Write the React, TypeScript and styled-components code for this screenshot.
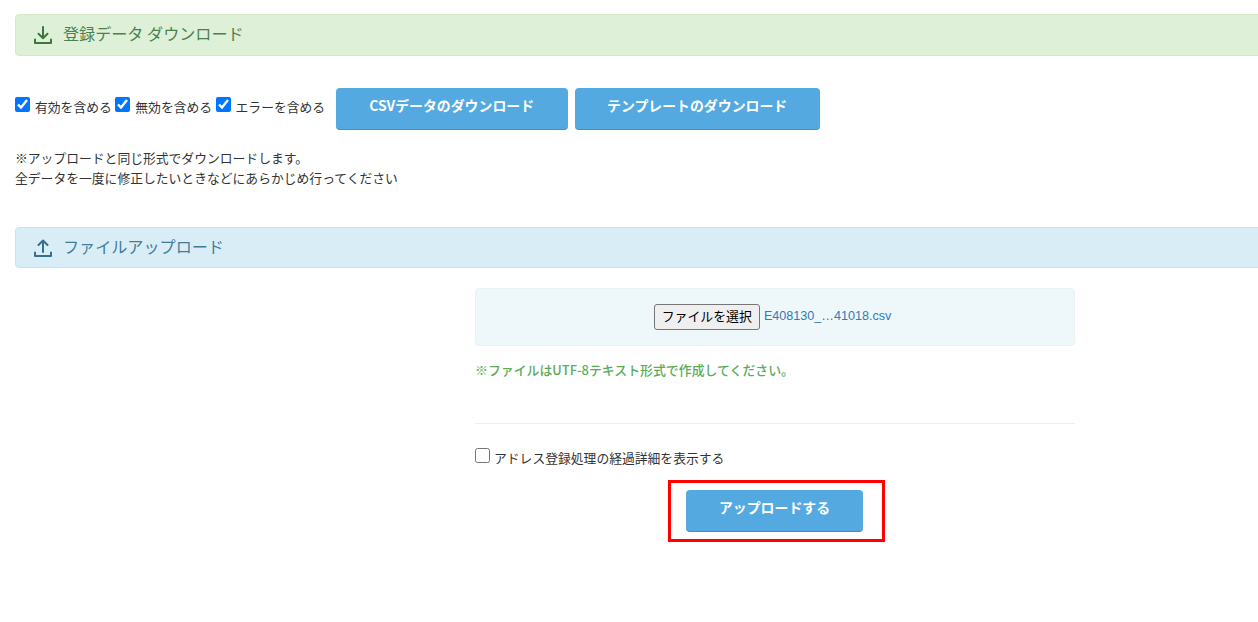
import React from 'react';
import styled, { createGlobalStyle } from 'styled-components';

const GlobalStyle = createGlobalStyle`
  html, body {
    margin: 0;
    padding: 0;
    background: #fff;
    overflow: hidden;
  }
  body {
    font-family: "Noto Sans CJK JP", "Liberation Sans", sans-serif;
    font-size: 12.8px;
    color: #333;
  }
`;

const Page = styled.div`
  width: 1258px;
  height: 622px;
  padding: 14px 0 0 15px;
  box-sizing: border-box;
  overflow: hidden;
`;

const Heading = styled.div<{ $tone: 'green' | 'blue' }>`
  display: flex;
  align-items: center;
  gap: 10px;
  width: 1300px;
  height: ${(p) => (p.$tone === 'green' ? '42px' : '41px')};
  box-sizing: border-box;
  padding-left: 17px;
  border: 1px solid ${(p) => (p.$tone === 'green' ? '#d6e9c6' : '#bce8f1')};
  border-radius: 4px;
  background: ${(p) => (p.$tone === 'green' ? '#dff0d8' : '#d9edf7')};
  color: ${(p) => (p.$tone === 'green' ? '#3c763d' : '#31708f')};
  font-size: 16.1px;
  svg {
    width: 20px;
    height: 20px;
    flex: none;
  }
`;

const HeadingTitle = styled.span`
  margin-bottom: 4px;
  opacity: 0.9;
`;

const OptionRow = styled.div`
  display: flex;
  align-items: center;
  height: 42px;
  margin-top: 32px;
`;

const CheckLabel = styled.label`
  display: flex;
  align-items: center;
  margin-right: 3.5px;
  margin-bottom: 6px;
  line-height: 20px;
  span {
    margin-left: 5px;
    position: relative;
    top: 1px;
  }
`;

const Check = styled.input`
  width: 15px;
  height: 15px;
  margin: 0;
  position: relative;
  top: -2px;
`;

const BlueButton = styled.button<{ $width: number }>`
  width: ${(p) => p.$width}px;
  height: 42px;
  padding: 0 0 7px;
  border: none;
  border-bottom: 1px solid #4a8fbd;
  border-radius: 4px;
  background: #53a9e0;
  color: #fff;
  font-family: inherit;
  font-size: 13.9px;
  font-weight: 700;
`;

const Buttons = styled.div`
  display: flex;
  gap: 7px;
  margin-left: 7px;
`;

const Note = styled.p`
  margin: 18px 0 0;
  font-size: 12.8px;
  line-height: 20px;
`;

const UploadHeading = styled.div`
  margin-top: 39px;
`;

const Form = styled.div`
  width: 600px;
  margin: 20px 0 0 460px;
`;

const FileBox = styled.div`
  display: flex;
  align-items: center;
  justify-content: center;
  height: 58px;
  box-sizing: border-box;
  padding-right: 5px;
  border: 1px solid #e8f1f4;
  border-radius: 4px;
  background: #eef7fa;
`;

const FileButton = styled.button`
  height: 26px;
  padding: 0 7px 3px;
  border: 1px solid #767676;
  border-radius: 3px;
  background: #efefef;
  color: #000;
  font-family: inherit;
  font-size: 12.9px;
`;

const FileName = styled.span`
  margin-left: 4px;
  margin-bottom: 2px;
  color: #337ab7;
  font-family: "Liberation Sans", sans-serif;
  font-size: 12.6px;
`;

const HelpText = styled.p`
  margin: 14px 0 0;
  color: #5bab5b;
  font-size: 12.9px;
  font-weight: 500;
  line-height: 20px;
`;

const Rule = styled.hr`
  margin: 43px 0 0;
  border: none;
  border-top: 1px solid #eee;
`;

const DetailLabel = styled.label`
  display: flex;
  align-items: center;
  margin-top: 23px;
  line-height: 20px;
  span {
    margin-left: 4px;
    position: relative;
    top: 1px;
  }
`;

const Highlight = styled.div`
  width: 217px;
  height: 62px;
  box-sizing: border-box;
  margin: 13px 0 0 193px;
  padding: 7px 0 0 15px;
  border: 3px solid #f00;
`;

const DownloadIcon = () => (
  <svg viewBox="0 0 20 20" fill="none" stroke="currentColor" strokeWidth="2" strokeLinecap="round" strokeLinejoin="round">
    <path d="M10 2v11M5.5 8.8 10 13.2l4.5-4.4M2 14.5V18h16v-3.5" />
  </svg>
);

const UploadIcon = () => (
  <svg viewBox="0 0 20 20" fill="none" stroke="currentColor" strokeWidth="2" strokeLinecap="round" strokeLinejoin="round">
    <path d="M10 14V2.5M5.5 7 10 2.5 14.5 7M2 14.5V18h16v-3.5" />
  </svg>
);

const App = () => (
  <Page>
    <GlobalStyle />
    <Heading $tone="green">
      <DownloadIcon />
      <HeadingTitle>登録データ ダウンロード</HeadingTitle>
    </Heading>
    <OptionRow>
      <CheckLabel>
        <Check type="checkbox" defaultChecked />
        <span>有効を含める</span>
      </CheckLabel>
      <CheckLabel>
        <Check type="checkbox" defaultChecked />
        <span>無効を含める</span>
      </CheckLabel>
      <CheckLabel>
        <Check type="checkbox" defaultChecked />
        <span>エラーを含める</span>
      </CheckLabel>
      <Buttons>
        <BlueButton $width={232}>CSVデータのダウンロード</BlueButton>
        <BlueButton $width={245}>テンプレートのダウンロード</BlueButton>
      </Buttons>
    </OptionRow>
    <Note>
      ※アップロードと同じ形式でダウンロードします。
      <br />
      全データを一度に修正したいときなどにあらかじめ行ってください
    </Note>
    <UploadHeading>
      <Heading $tone="blue">
        <UploadIcon />
        <HeadingTitle>ファイルアップロード</HeadingTitle>
      </Heading>
    </UploadHeading>
    <Form>
      <FileBox>
        <FileButton type="button">ファイルを選択</FileButton>
        <FileName>E408130_…41018.csv</FileName>
      </FileBox>
      <HelpText>※ファイルはUTF-8テキスト形式で作成してください。</HelpText>
      <Rule />
      <DetailLabel>
        <Check type="checkbox" />
        <span>アドレス登録処理の経過詳細を表示する</span>
      </DetailLabel>
      <Highlight>
        <BlueButton $width={177}>アップロードする</BlueButton>
      </Highlight>
    </Form>
  </Page>
);

export default App;
